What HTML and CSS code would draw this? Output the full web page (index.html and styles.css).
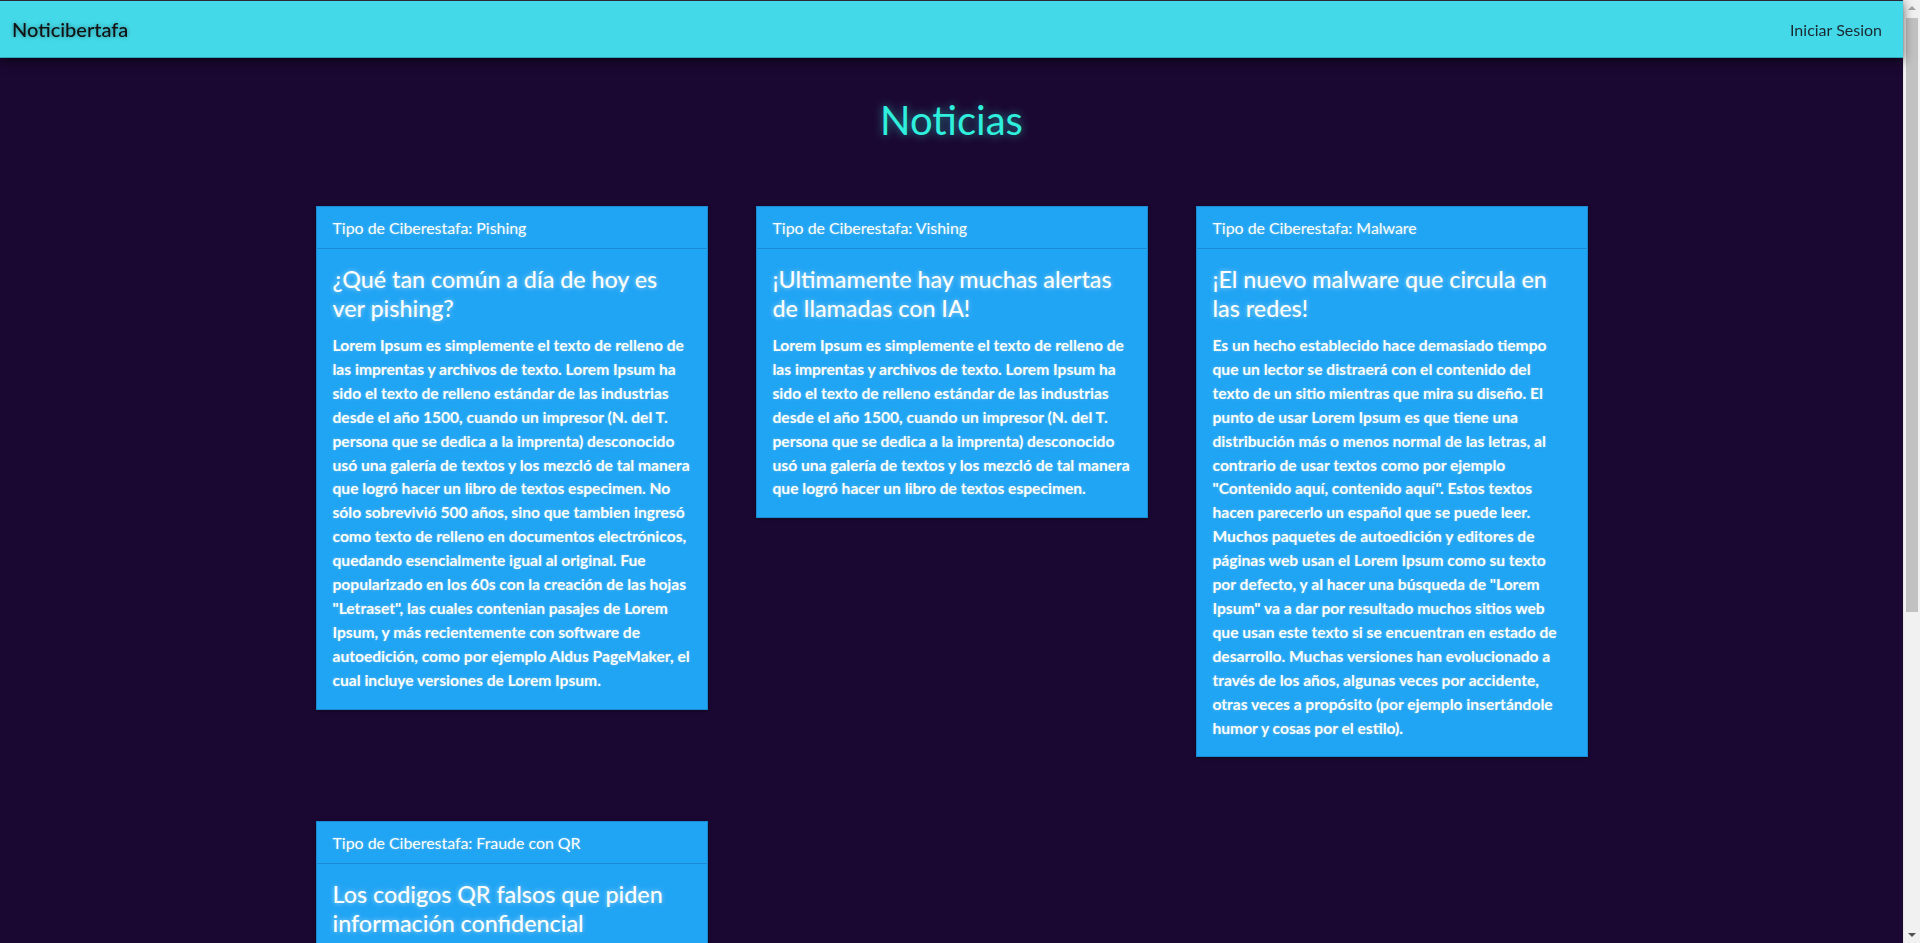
FILE: index.html
```html
<!DOCTYPE html>
<html lang="es">
<head>
<meta charset="utf-8">
<title>Noticibertafa</title>
<link rel="stylesheet" href="styles.css">
</head>
<body>
<nav class="navbar">
  <a class="brand" href="#">Noticibertafa</a>
  <a class="login" href="#">Iniciar Sesion</a>
</nav>
<main class="main">
  <h1 class="page-title">Noticias</h1>
  <div class="grid">
    <article class="card">
      <div class="card-header">Tipo de Ciberestafa: Pishing</div>
      <div class="card-body">
        <h4 class="card-title">¿Qué tan común a día de hoy es ver pishing?</h4>
        <p class="card-text">Lorem Ipsum es simplemente el texto de relleno de las imprentas y archivos de texto. Lorem Ipsum ha sido el texto de relleno estándar de las industrias desde el año 1500, cuando un impresor (N. del T. persona que se dedica a la imprenta) desconocido usó una galería de textos y los mezcló de tal manera que logró hacer un libro de textos especimen. No sólo sobrevivió 500 años, sino que tambien ingresó como texto de relleno en documentos electrónicos, quedando esencialmente igual al original. Fue popularizado en los 60s con la creación de las hojas "Letraset", las cuales contenian pasajes de Lorem Ipsum, y más recientemente con software de autoedición, como por ejemplo Aldus PageMaker, el cual incluye versiones de Lorem Ipsum.</p>
      </div>
    </article>
    <article class="card">
      <div class="card-header">Tipo de Ciberestafa: Vishing</div>
      <div class="card-body">
        <h4 class="card-title">¡Ultimamente hay muchas alertas de llamadas con IA!</h4>
        <p class="card-text">Lorem Ipsum es simplemente el texto de relleno de las imprentas y archivos de texto. Lorem Ipsum ha sido el texto de relleno estándar de las industrias desde el año 1500, cuando un impresor (N. del T. persona que se dedica a la imprenta) desconocido usó una galería de textos y los mezcló de tal manera que logró hacer un libro de textos especimen.</p>
      </div>
    </article>
    <article class="card">
      <div class="card-header">Tipo de Ciberestafa: Malware</div>
      <div class="card-body">
        <h4 class="card-title">¡El nuevo malware que circula en las redes!</h4>
        <p class="card-text">Es un hecho establecido hace demasiado tiempo que un lector se distraerá con el contenido del texto de un sitio mientras que mira su diseño. El punto de usar Lorem Ipsum es que tiene una distribución más o menos normal de las letras, al contrario de usar textos como por ejemplo "Contenido aquí, contenido aquí". Estos textos hacen parecerlo un español que se puede leer. Muchos paquetes de autoedición y editores de páginas web usan el Lorem Ipsum como su texto por defecto, y al hacer una búsqueda de "Lorem Ipsum" va a dar por resultado muchos sitios web que usan este texto si se encuentran en estado de desarrollo. Muchas versiones han evolucionado a través de los años, algunas veces por accidente, otras veces a propósito (por ejemplo insertándole humor y cosas por el estilo).</p>
      </div>
    </article>
    <article class="card">
      <div class="card-header">Tipo de Ciberestafa: Fraude con QR</div>
      <div class="card-body">
        <h4 class="card-title">Los codigos QR falsos que piden información confidencial</h4>
        <p class="card-text">Lorem Ipsum es simplemente el texto de relleno de las imprentas y archivos de texto. Lorem Ipsum ha sido el texto de relleno estándar de las industrias desde el año 1500, cuando un impresor (N. del T. persona que se dedica a la imprenta) desconocido usó una galería de textos y los mezcló de tal manera que logró hacer un libro de textos especimen.</p>
      </div>
    </article>
  </div>
</main>
<div class="scrollbar" aria-hidden="true">
  <span class="arrow arrow-up"></span>
  <span class="thumb"></span>
  <span class="arrow arrow-down"></span>
</div>
</body>
</html>
```

FILE: styles.css
```css
* { box-sizing: border-box; }
html, body { margin: 0; padding: 0; }
body {
  background: #1b0832;
  font-family: Lato, "Open Sans", sans-serif;
  color: #fff;
  padding-right: 17px;
}
.navbar {
  height: 58px;
  background: #44d9e8;
  border-top: 1px solid #2a2a3a;
  border-bottom: 1px solid #2fa9bb;
  display: flex;
  align-items: center;
  justify-content: space-between;
  padding: 0 21px 0 12px;
  box-shadow: 0 3px 10px rgba(0, 0, 0, 0.6);
  position: relative;
  z-index: 1;
}
.brand {
  color: #111;
  text-decoration: none;
  font-size: 20px;
  font-weight: 500;
  text-shadow: 0 0 4px rgba(0, 0, 0, 0.4);
}
.login {
  color: #1a2a33;
  text-decoration: none;
  font-size: 16px;
}
.main {
  padding-top: 38px;
}
.page-title {
  margin: 0 0 62px;
  text-align: center;
  font-size: 40px;
  font-weight: 400;
  line-height: 48px;
  color: #2ff0dd;
  text-shadow: 0 0 10px rgba(47, 240, 221, 0.55);
}
.grid {
  width: 1272px;
  margin: 0 auto;
  display: grid;
  grid-template-columns: repeat(3, 392px);
  column-gap: 48px;
  row-gap: 64px;
  align-items: start;
}
.card {
  background: #20a4f4;
  border: 1px solid #1a8ad2;
  box-shadow: 0 1px 3px rgba(0, 0, 0, 0.4);
}
.card-header {
  padding: 9px 16px 8px;
  font-size: 15.9px;
  line-height: 24px;
  border-bottom: 1px solid #1a8ad2;
  text-shadow: 0 0 3px rgba(255, 255, 255, 0.35);
}
.card-body {
  padding: 16px;
}
.card-title {
  margin: 0 0 11px;
  font-size: 23.3px;
  font-weight: 500;
  line-height: 29px;
  text-shadow: 0 0 5px rgba(255, 255, 255, 0.55);
}
.card-text {
  margin: 0;
  font-size: 15.6px;
  font-weight: 700;
  line-height: 23.9px;
  text-shadow: 0 0 3px rgba(255, 255, 255, 0.35);
}
.scrollbar {
  position: fixed;
  top: 0;
  right: 0;
  width: 17px;
  height: 100vh;
  background: #f1f1f1;
  border-left: 1px solid #e6e6e6;
}
.thumb {
  position: absolute;
  left: 2px;
  right: 2px;
  top: 18px;
  height: 594px;
  background: #c1c1c1;
}
.arrow {
  position: absolute;
  left: 4px;
  width: 0;
  height: 0;
  border-left: 4px solid transparent;
  border-right: 4px solid transparent;
}
.arrow-up {
  top: 6px;
  border-bottom: 4px solid #a3a3a3;
}
.arrow-down {
  bottom: 6px;
  border-top: 4px solid #505050;
}
```
